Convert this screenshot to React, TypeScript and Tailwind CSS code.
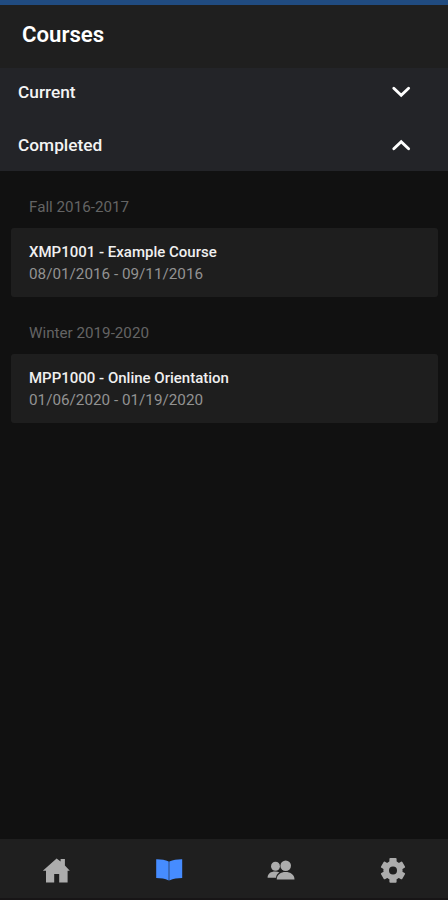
import React from 'react';

type Course = {
  term: string;
  title: string;
  dates: string;
};

const completed: Course[] = [
  { term: 'Fall 2016-2017', title: 'XMP1001 - Example Course', dates: '08/01/2016 - 09/11/2016' },
  { term: 'Winter 2019-2020', title: 'MPP1000 - Online Orientation', dates: '01/06/2020 - 01/19/2020' },
];

const tabs: { label: string; icon: React.ReactNode; active?: boolean }[] = [
  {
    label: 'Home',
    icon: <path d="M14.6 2.6L18.6 5.6V3H22.9V9.6L27.8 14.8H25.6V26.4H17.2V18H12.2V26.4H4V14.8H.8Z" />,
  },
  {
    label: 'Courses',
    active: true,
    icon: (
      <>
        <path d="M2.2 3.3C7 3.2 11 3.9 14.7 5.5V24.5C11 22.7 7 22 2.2 22Z" />
        <path d="M28.2 3.3C23.4 3.2 19.4 3.9 15.3 5.5V24.5C19.4 22.7 23.4 22 28.2 22Z" />
      </>
    ),
  },
  {
    label: 'People',
    icon: (
      <>
        <circle cx="9.5" cy="10.2" r="4.5" />
        <path d="M1.6 21.8C1.6 17.6 5 15.6 9 15.6C10.8 15.6 12.3 15.9 13.4 16.4C11.2 17.7 10.1 19.5 10.1 21.8Z" />
        <circle cx="19.7" cy="9.7" r="5.8" fill="#1f1f1f" />
        <circle cx="19.7" cy="9.7" r="5.3" />
        <path d="M10.7 23.5C10.7 18.5 14.8 16 19.6 16C24.4 16 28.5 18.5 28.5 23.5Z" />
      </>
    ),
  },
  {
    label: 'Settings',
    icon: (
      <>
        <circle cx="15" cy="14.4" r="9.6" />
        <rect x="11.4" y="2.1" width="7.2" height="24.6" rx="1" />
        <rect x="11.4" y="2.1" width="7.2" height="24.6" rx="1" transform="rotate(60 15 14.4)" />
        <rect x="11.4" y="2.1" width="7.2" height="24.6" rx="1" transform="rotate(120 15 14.4)" />
        <circle cx="15" cy="14.4" r="4" fill="#1f1f1f" />
      </>
    ),
  },
];

function AccordionHeader({ title, open }: { title: string; open?: boolean }) {
  return (
    <button className="flex h-[53px] w-full items-center justify-between pr-[37px] pl-[18px] text-left">
      <span className="text-[17.3px] leading-6 font-medium text-[#f4f4f4]">{title}</span>
      <svg
        className="h-3 w-5"
        viewBox="0 0 20 12"
        fill="none"
        stroke="#fff"
        strokeWidth="2.9"
        strokeLinecap="round"
        strokeLinejoin="miter"
      >
        <path d={open ? 'M2.8 9.8L10.2 2.8L17.6 9.8' : 'M2.8 2.2L10.2 9.2L17.6 2.2'} />
      </svg>
    </button>
  );
}

function CourseGroup({ term, title, dates }: Course) {
  return (
    <section className="mb-[26px]">
      <h2 className="pl-[18px] text-[15.2px] leading-5 text-[#646464]">{term}</h2>
      <article className="mt-[11px] h-[69px] rounded-[3px] bg-[#1e1e1e] pt-[13px] pl-[18px]">
        <p className="text-[15px] leading-[22px] font-medium text-[#f0f0f0]">{title}</p>
        <p className="text-[15.25px] leading-[22px] text-[#929292]">{dates}</p>
      </article>
    </section>
  );
}

export default function App() {
  return (
    <div className="flex h-[900px] w-[448px] flex-col overflow-hidden border-t-[5px] border-[#204b80] bg-[#111111] font-['Roboto',sans-serif]">
      <header className="h-[63px] bg-[#1f1f1f] pt-[14px] pl-[22px]">
        <h1 className="text-[22.2px] leading-[30px] font-semibold text-white">Courses</h1>
      </header>
      <div className="h-[103px] bg-[#232428]">
        <div className="-mt-[3px]">
          <AccordionHeader title="Current" />
          <AccordionHeader title="Completed" open />
        </div>
      </div>
      <main className="flex-1 pt-[26px] pr-[10px] pl-[11px]">
        {completed.map((course) => (
          <CourseGroup key={course.title} {...course} />
        ))}
      </main>
      <nav className="grid h-[61px] grid-cols-4 border-b-2 border-[#171516] bg-[#1f1f1f]">
        {tabs.map(({ label, icon, active }) => (
          <button
            key={label}
            aria-label={label}
            className={`flex items-center justify-center pt-[3px] ${active ? 'text-[#468cff]' : 'text-[#acacac]'}`}
          >
            <svg className="h-7 w-7 overflow-visible" viewBox="0 0 28 28" fill="currentColor">
              {icon}
            </svg>
          </button>
        ))}
      </nav>
    </div>
  );
}
